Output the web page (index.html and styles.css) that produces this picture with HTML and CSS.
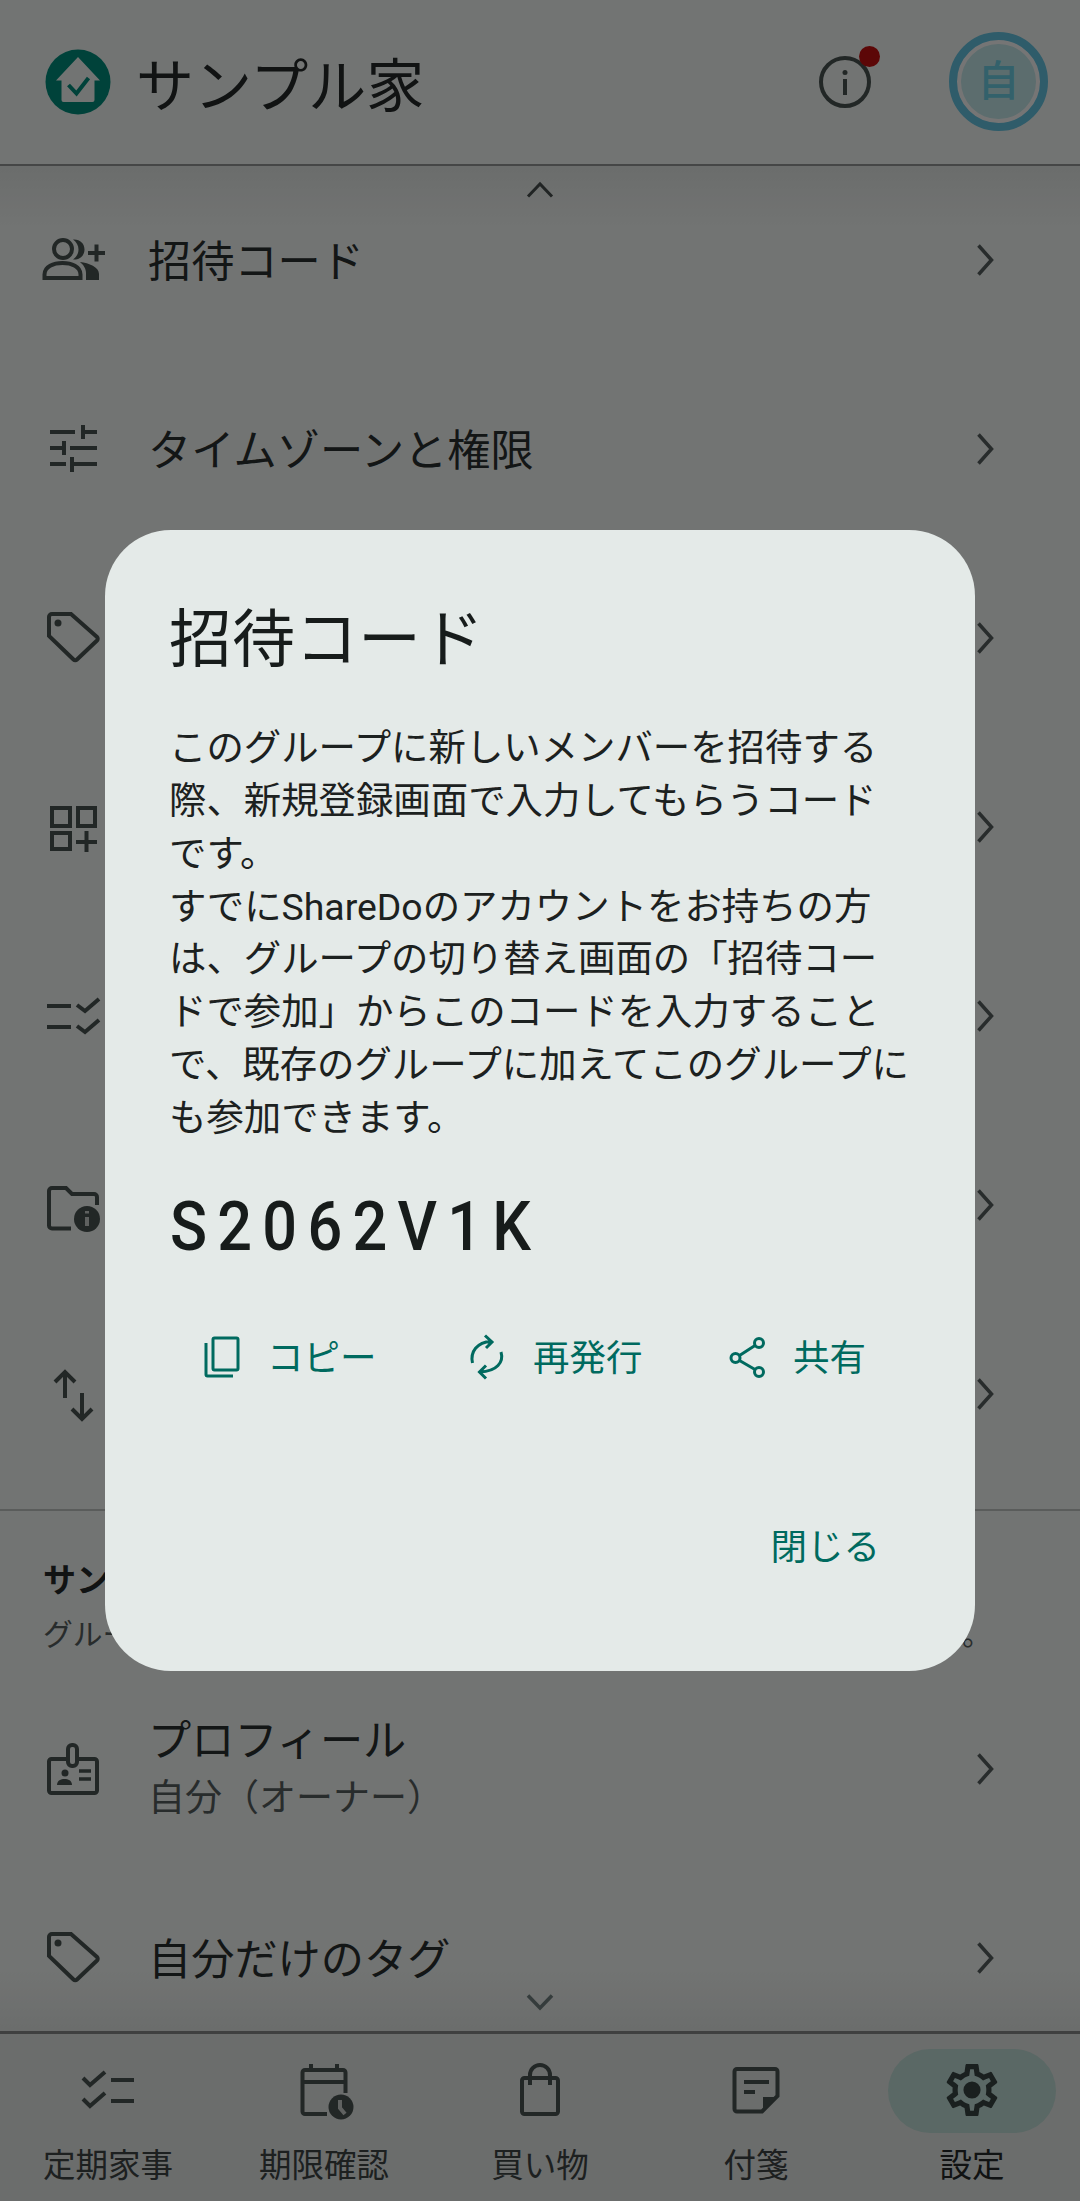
FILE: index.html
```html
<!DOCTYPE html>
<html lang="ja">
<head>
<meta charset="utf-8">
<title>招待コード</title>
<link rel="stylesheet" href="styles.css">
</head>
<body>
<div class="app">
  <header class="top">
    <svg class="logo" viewBox="0 0 66 66"><circle class="logo-bg" cx="33" cy="33" r="32.5"/><path class="logo-house" d="M33 8 L55 31.5 H49.5 V51 a2 2 0 0 1-2 2 H18.500 a2 2 0 0 1-2-2 V31.500 H11 Z"/><path class="logo-check" d="M23.500 36 L31.500 44.500 L43.500 29"/></svg>
    <h1 class="brand">サンプル家</h1>
    <div class="info">
      <svg class="info-ic" viewBox="0 0 56 56"><circle class="ic" cx="28" cy="28" r="24"/><circle class="solid" cx="28" cy="18.500" r="2.500"/><path class="ic thin" d="M28 25 V41"/></svg>
      <span class="dot"></span>
    </div>
    <div class="avatar"><span class="avatar-in">自</span></div>
  </header>

  <main class="list">
    <svg class="scroll-mark up" viewBox="0 0 30 18"><path class="mark" d="M3 15.500 L15 3 L27 15.500"/></svg>

    <div class="row">
      <svg class="ri" viewBox="0 0 72 72"><circle class="ic" cx="26" cy="24" r="9"/><path class="ic" d="M7.500 53 V49.500 C7.500 41.500 16.500 38 25.500 38 S43.500 41.500 43.500 49.500 V53 Z"/><path class="solid" d="M36 14.500 C43 14 47.500 18.500 47.500 24.500 S43 35 36 34.500 C39.500 32 41.500 28.500 41.500 24.500 S39.500 17 36 14.500 Z"/><path class="solid" d="M43 37 C52 38 62 42 62 49 V55 H49 V48 C49 43.500 46.500 40 43 37 Z"/><path class="ic" d="M51 28 H68 M59.500 19.500 V36.500"/></svg>
      <span class="label">招待コード</span>
      <svg class="chevron" viewBox="0 0 20 34"><path class="chev" d="M3.500 2.500 L16.500 17 L3.500 31.500"/></svg>
    </div>
    <div class="row">
      <svg class="ri" viewBox="0 0 72 72"><path class="ic" d="M13 18 H38 M46 11 V25 M46 18 H60 M13 34 H27 M27 27 V41 M33 34 H60 M13 50 H29 M35 43 V58 M35 50 H60"/></svg>
      <span class="label">タイムゾーンと権限</span>
      <svg class="chevron" viewBox="0 0 20 34"><path class="chev" d="M3.500 2.500 L16.500 17 L3.500 31.500"/></svg>
    </div>
    <div class="row">
      <svg class="ri" viewBox="0 0 72 72"><path class="ic" d="M15 11 H34 L60 34 a2.500 2.500 0 0 1 0 3.500 L40 56.500 a2.500 2.500 0 0 1-3.500 0 L12 33 V14 a3 3 0 0 1 3-3 Z"/><circle class="solid" cx="21" cy="20" r="3.500"/></svg>
      <span class="label">タグ管理</span>
      <svg class="chevron" viewBox="0 0 20 34"><path class="chev" d="M3.500 2.500 L16.500 17 L3.500 31.500"/></svg>
    </div>
    <div class="row">
      <svg class="ri" viewBox="0 0 72 72"><path class="ic" d="M15 16 H33 V34 H15 Z M41 16 H58 V34 H41 Z M15 41 H33 V57 H15 Z M39 50 H60 M49.500 39 V60"/></svg>
      <span class="label">カテゴリ管理</span>
      <svg class="chevron" viewBox="0 0 20 34"><path class="chev" d="M3.500 2.500 L16.500 17 L3.500 31.500"/></svg>
    </div>
    <div class="row">
      <svg class="ri" viewBox="0 0 72 72"><path class="ic" d="M10 25 H34 M10 46 H34 M40 24 L48 30 L62 18 M40 45 L48 51 L62 39"/></svg>
      <span class="label">項目の管理</span>
      <svg class="chevron" viewBox="0 0 20 34"><path class="chev" d="M3.500 2.500 L16.500 17 L3.500 31.500"/></svg>
    </div>
    <div class="row">
      <svg class="ri" viewBox="0 0 72 72"><path class="ic" d="M34 58.500 H15 a3 3 0 0 1-3-3 V21 a3 3 0 0 1 3-3 H29 L35 24 H57 a3 3 0 0 1 3 3 V35"/><circle class="solid" cx="50" cy="49" r="13"/><path class="knock" d="M50 47 V56 M50 41 V43.500"/></svg>
      <span class="label">グループ情報</span>
      <svg class="chevron" viewBox="0 0 20 34"><path class="chev" d="M3.500 2.500 L16.500 17 L3.500 31.500"/></svg>
    </div>
    <div class="row">
      <svg class="ri" viewBox="0 0 72 72"><path class="ic" d="M28 13 V39 M18 23 L28 13 L38 23 M45 34 V60 M35 50 L45 60 L55 50"/></svg>
      <span class="label">データの入出力</span>
      <svg class="chevron" viewBox="0 0 20 34"><path class="chev" d="M3.500 2.500 L16.500 17 L3.500 31.500"/></svg>
    </div>

    <section class="section">
      <h2 class="section-title">サンプル家のメンバー設定</h2>
      <p class="section-sub">グループ全体に関する設定は、オーナーと管理者のみが変更できます。</p>
    </section>

    <div class="row">
      <svg class="ri" viewBox="0 0 72 72"><rect class="ic" x="12" y="25" width="48" height="34" rx="2.500"/><rect class="ic fillbg" x="31" y="11" width="9" height="21" rx="4"/><circle class="solid" cx="28" cy="39" r="3.500"/><path class="solid" d="M20 51 C20 46.500 24 45 27.500 45 S35 46.500 35 51 Z"/><path class="ic slim" d="M42 37 H54 M42 45 H54"/></svg>
      <div class="stack">
        <span class="label">プロフィール</span>
        <span class="sub">自分（オーナー）</span>
      </div>
      <svg class="chevron" viewBox="0 0 20 34"><path class="chev" d="M3.500 2.500 L16.500 17 L3.500 31.500"/></svg>
    </div>
    <div class="row">
      <svg class="ri" viewBox="0 0 72 72"><path class="ic" d="M15 11 H34 L60 34 a2.500 2.500 0 0 1 0 3.500 L40 56.500 a2.500 2.500 0 0 1-3.500 0 L12 33 V14 a3 3 0 0 1 3-3 Z"/><circle class="solid" cx="21" cy="20" r="3.500"/></svg>
      <span class="label">自分だけのタグ</span>
      <svg class="chevron" viewBox="0 0 20 34"><path class="chev" d="M3.500 2.500 L16.500 17 L3.500 31.500"/></svg>
    </div>

    <svg class="scroll-mark down" viewBox="0 0 30 18"><path class="mark strong" d="M3 2.500 L15 15 L27 2.500"/></svg>
  </main>

  <nav class="nav">
    <div class="tab">
      <svg class="ti" viewBox="0 0 72 72"><path class="ic" d="M39 26 H62 M39 47 H62 M11 24 L18 31 L33 18 M11 45 L18 52 L33 39"/></svg>
      <span class="tab-label">定期家事</span>
    </div>
    <div class="tab">
      <svg class="ti" viewBox="0 0 72 72"><path class="ic" d="M39 60 H17 a2.500 2.500 0 0 1-2.500-2.500 V18.500 a2.500 2.500 0 0 1 2.500-2.500 H55 a2.500 2.500 0 0 1 2.500 2.500 V39 M15 28 H57 M23 10 V16 M49 10 V16"/><circle class="solid" cx="53" cy="53" r="12.500"/><path class="knock" d="M52 46 V54 L57 60"/></svg>
      <span class="tab-label">期限確認</span>
    </div>
    <div class="tab">
      <svg class="ti" viewBox="0 0 72 72"><rect class="ic" x="18" y="24" width="36" height="36" rx="2.500"/><path class="ic" d="M26 31 V21 a10 10 0 0 1 20 0 V31"/></svg>
      <span class="tab-label">買い物</span>
    </div>
    <div class="tab">
      <svg class="ti" viewBox="0 0 72 72"><path class="ic" d="M17 15 H55 a2.500 2.500 0 0 1 2.500 2.500 V42 L42 57.500 H17 a2.500 2.500 0 0 1-2.500-2.500 V17.500 a2.500 2.500 0 0 1 2.500-2.500 Z"/><path class="solid" d="M43 43 H57 L43 58 Z"/><path class="ic" d="M24 28 H49 M24 38 H35"/></svg>
      <span class="tab-label">付箋</span>
    </div>
    <div class="tab active">
      <span class="pill"></span>
      <svg class="ti" viewBox="0 0 72 72"><g transform="translate(4.800 4.800) scale(2.600)"><path class="solid-dark" d="M19.430 12.980c.04-.32.07-.64.07-.98 0-.34-.03-.66-.07-.98l2.110-1.650c.19-.15.24-.42.12-.64l-2-3.460c-.09-.16-.26-.25-.44-.25-.06 0-.12.01-.17.03l-2.490 1c-.52-.4-1.080-.73-1.690-.98l-.38-2.650C14.460 2.180 14.250 2 14 2h-4c-.25 0-.46.18-.49.42l-.38 2.650c-.61.25-1.170.59-1.690.98l-2.490-1c-.06-.02-.12-.03-.18-.03-.17 0-.34.09-.43.25l-2 3.460c-.13.22-.07.49.12.64l2.110 1.650c-.04.32-.07.65-.07.98 0 .33.03.66.07.98l-2.110 1.650c-.19.15-.24.42-.12.64l2 3.460c.09.16.26.25.44.25.06 0 .12-.01.17-.03l2.490-1c.52.4 1.080.73 1.690.98l.38 2.650c.03.24.24.42.49.42h4c.25 0 .46-.18.49-.42l.38-2.650c.61-.25 1.170-.59 1.690-.98l2.490 1c.06.02.12.03.18.03.17 0 .34-.09.43-.25l2-3.460c.12-.22.07-.49-.12-.64l-2.110-1.650zm-1.980-1.710c.04.31.05.52.05.73 0 .21-.02.43-.05.73l-.14 1.130.89.7 1.080.84-.7 1.210-1.270-.51-1.040-.42-.9.68c-.43.32-.84.56-1.250.73l-1.060.43-.16 1.130-.2 1.350h-1.400l-.19-1.350-.16-1.130-1.060-.43c-.43-.18-.83-.41-1.230-.71l-.91-.7-1.060.43-1.270.51-.7-1.210 1.080-.84.89-.7-.14-1.130c-.03-.31-.05-.54-.05-.74s.02-.43.05-.73l.14-1.130-.89-.7-1.080-.84.7-1.210 1.270.51 1.040.42.9-.68c.43-.32.84-.56 1.250-.73l1.060-.43.16-1.130.2-1.350h1.390l.19 1.350.16 1.130 1.060.43c.43.18.83.41 1.230.71l.91.7 1.060-.43 1.270-.51.7 1.210-1.070.85-.89.7.14 1.130z"/><circle class="solid-dark" cx="12" cy="12" r="3.300"/></g></svg>
      <span class="tab-label">設定</span>
    </div>
  </nav>

  <div class="scrim"></div>

  <div class="dialog" role="dialog">
    <h2 class="d-title">招待コード</h2>
    <p class="d-body">このグループに新しいメンバーを招待する<br>際、新規登録画面で入力してもらうコード<br>です。<br>すでにShareDoのアカウントをお持ちの方<br>は、グループの切り替え画面の「招待コー<br>ドで参加」からこのコードを入力すること<br>で、既存のグループに加えてこのグループに<br>も参加できます。</p>
    <div class="d-code">S2062V1K</div>
    <div class="d-actions">
      <div class="act">
        <svg class="ai" viewBox="0 0 54 54"><rect class="tl" x="19" y="6" width="25" height="32" rx="1.500"/><path class="tl" d="M12 11 V42.500 a1.500 1.500 0 0 0 1.500 1.500 H39"/></svg>
        <span>コピー</span>
      </div>
      <div class="act">
        <svg class="ai" viewBox="0 0 54 54"><path class="tl" d="M12.500 31 C10 20 17 10 31 9.500 M25 3.500 L32 10 L26 16 M41 20 C44 30 37 39.500 20 40 M26 33.500 L19.500 40 L26 46.500"/></svg>
        <span>再発行</span>
      </div>
      <div class="act">
        <svg class="ai" viewBox="0 0 54 54"><circle class="tl" cx="39" cy="11" r="4.500"/><circle class="tl" cx="15.500" cy="26" r="4.500"/><circle class="tl" cx="39" cy="40" r="4.500"/><path class="tl" d="M19.500 23.500 L35 13.500 M19.500 28.500 L35 37.500"/></svg>
        <span>共有</span>
      </div>
    </div>
    <div class="d-foot"><span class="d-close">閉じる</span></div>
  </div>
</div>
</body>
</html>
```
FILE: styles.css
```css
* { box-sizing: border-box; margin: 0; padding: 0; }
html, body { width: 1080px; height: 2201px; overflow: hidden; }
body {
  font-family: Roboto, "Noto Sans CJK JP", sans-serif;
  background: #f8fcfa;
  color: #2b3030;
}
.app {
  position: relative;
  width: 1080px;
  height: 2201px;
  display: flex;
  flex-direction: column;
  overflow: hidden;
}

/* header */
.top {
  position: relative;
  flex: 0 0 166px;
  display: flex;
  align-items: center;
  padding: 0 32px 0 45px;
  border-bottom: 2px solid #969a98;
}
.logo { width: 66px; height: 66px; flex: none; }
.logo-bg { fill: #00907f; }
.logo-house { fill: #f8fcfa; }
.logo-check { fill: none; stroke: #00907f; stroke-width: 4; }
.brand {
  margin-left: 25px;
  padding-top: 10px;
  font-size: 58px;
  font-weight: 400;
  line-height: 1;
  color: #252b2b;
  white-space: nowrap;
}
.info {
  position: relative;
  width: 56px;
  height: 56px;
  margin-left: auto;
  margin-right: 175px;
  flex: none;
}
.info-ic { display: block; width: 56px; height: 56px; }
.dot {
  position: absolute;
  left: 42px;
  top: -8px;
  width: 21px;
  height: 21px;
  border-radius: 50%;
  background: #c81111;
}
.avatar {
  position: absolute;
  left: 949px;
  top: 32px;
  width: 99px;
  height: 99px;
  border-radius: 50%;
  border: 8px solid #66c8e6;
  background: #fff;
  display: flex;
  align-items: center;
  justify-content: center;
}
.avatar-in {
  width: 75px;
  height: 75px;
  border-radius: 50%;
  background: #c8edef;
  color: #6fd4ea;
  font-size: 42px;
  font-weight: 500;
  line-height: 75px;
  text-align: center;
}

/* list */
.list {
  position: relative;
  flex: 1 1 auto;
  min-height: 0;
  overflow: hidden;
  background: linear-gradient(#e9edeb, #f8fcfa 60px, #f8fcfa calc(100% - 60px), #e9edeb);
}
.scroll-mark {
  position: absolute;
  left: 525px;
  width: 30px;
  height: 18px;
}
.scroll-mark.up { top: 15px; }
.scroll-mark.down { bottom: 20px; z-index: 2; }
.row {
  height: 189px;
  display: flex;
  align-items: center;
  padding: 0 85px 0 37px;
}
.ri { width: 72px; height: 72px; flex: none; }
.label {
  display: block;
  padding-top: 4px;
  font-size: 43.2px;
  line-height: 56px;
  white-space: nowrap;
  color: #2b3030;
}
.row > .label, .stack { margin-left: 39px; }
.stack { display: flex; flex-direction: column; padding-top: 2px; }
.stack .label { padding-top: 0; }
.sub {
  margin-top: 1px;
  font-size: 37px;
  line-height: 56px;
  color: #576060;
  white-space: nowrap;
}
.chevron { width: 20px; height: 34px; margin-left: auto; margin-top: -2px; flex: none; }
.section {
  margin-top: 20px;
  height: 166px;
  border-top: 2px solid #c4c8c6;
  padding: 48px 0 0 43px;
}
.section-title {
  font-size: 33px;
  font-weight: 700;
  line-height: 44px;
  color: #252b2b;
  white-space: nowrap;
}
.section-sub {
  margin-top: 10px;
  font-size: 29.8px;
  line-height: 44px;
  color: #576060;
  white-space: nowrap;
}

/* icons */
.ic { fill: none; stroke: #4a5553; stroke-width: 4; }
.ic.thin { stroke-width: 4; }
.ic.slim { stroke-width: 3.5; }
.ic.fillbg { fill: #f8fcfa; }
.solid { fill: #4a5553; stroke: none; }
.solid-dark { fill: #3a4644; stroke: none; }
.knock { fill: none; stroke: #d0d4d2; stroke-width: 4; }
.chev { fill: none; stroke: #576060; stroke-width: 3.5; }
.mark { fill: none; stroke: #485050; stroke-width: 3; }
.mark.strong { stroke: #353c3c; stroke-width: 3.5; }

/* nav */
.nav {
  flex: 0 0 170px;
  display: grid;
  grid-template-columns: repeat(5, 216px);
  background: #e9edeb;
  border-top: 3px solid #898d8b;
}
.tab {
  position: relative;
  display: flex;
  flex-direction: column;
  align-items: center;
  padding-top: 20px;
}
.ti { position: relative; width: 72px; height: 72px; flex: none; }
.tab-label {
  position: relative;
  margin-top: 18px;
  font-size: 32.5px;
  line-height: 44px;
  color: #3f4747;
  white-space: nowrap;
}
.active .tab-label { color: #252b2b; }
.pill {
  position: absolute;
  left: 24px;
  top: 15px;
  width: 168px;
  height: 84px;
  border-radius: 42px;
  background: #c4e2dc;
}

/* dialog */
.scrim {
  position: absolute;
  inset: 0;
  background: rgba(0, 0, 0, .54);
}
.dialog {
  position: absolute;
  left: 105px;
  top: 530px;
  width: 870px;
  height: 1141px;
  border-radius: 66px;
  background: #e4eae8;
  padding: 66px 0 0 64px;
  color: #1c2120;
}
.d-title {
  font-size: 63px;
  font-weight: 400;
  line-height: 88px;
  color: #171c1b;
  white-space: nowrap;
}
.d-body {
  margin-top: 38px;
  font-size: 37.4px;
  line-height: 52.85px;
  white-space: nowrap;
}
.d-code {
  margin-top: 43px;
  margin-left: 1px;
  font-size: 68px;
  font-weight: 500;
  line-height: 78px;
  letter-spacing: 11.4px;
  color: #171c1b;
  transform: scaleX(.9);
  transform-origin: left center;
}
.d-actions {
  margin-top: 66px;
  margin-left: 25px;
  display: grid;
  grid-template-columns: 266px 260px auto;
  color: #006a5f;
  font-size: 36.5px;
  line-height: 54px;
}
.act { display: flex; align-items: center; gap: 19px; white-space: nowrap; }
.ai { width: 54px; height: 54px; flex: none; }
.tl { fill: none; stroke: #006a5f; stroke-width: 3; }
.d-foot {
  margin-top: 135px;
  padding-right: 95px;
  display: flex;
  justify-content: flex-end;
  font-size: 36.5px;
  line-height: 54px;
  color: #006a5f;
}
```
